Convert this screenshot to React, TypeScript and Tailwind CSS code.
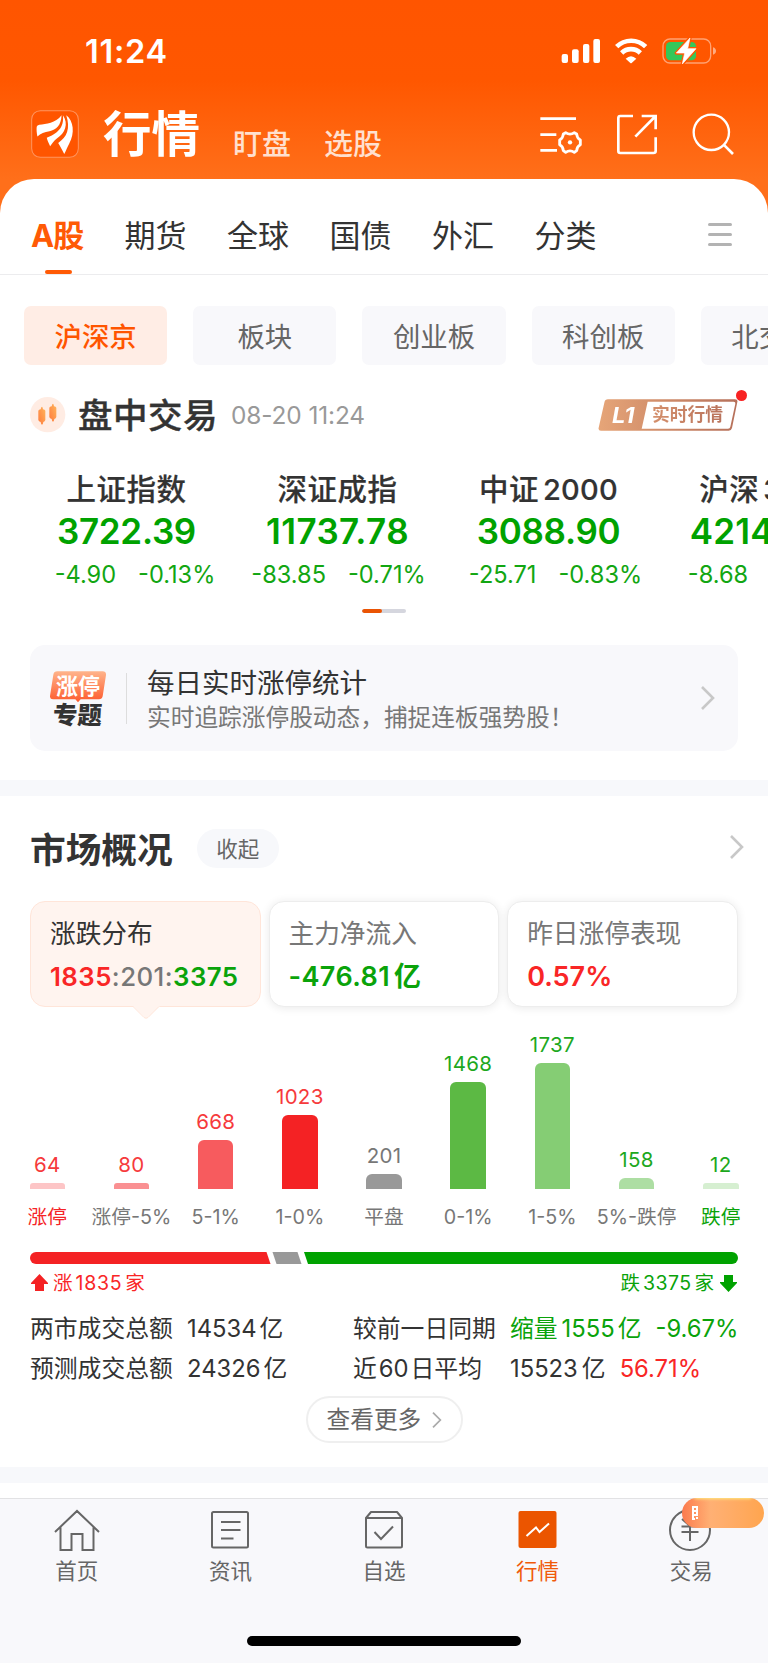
import type { ReactNode } from "react"
import clsx from "clsx"

const tabs = ["期货", "全球", "国债", "外汇", "分类"]

const boards = ["沪深京", "板块", "创业板", "科创板", "北交所"]

const indices = [
    { name: "上证指数", value: "3722.39", change: "-4.90", percent: "-0.13%", shift: "pl-[17px]", spacing: "tracking-[-0.3px]" },
    { name: "深证成指", value: "11737.78", change: "-83.85", percent: "-0.71%", shift: "pl-[2px]", spacing: "tracking-[0.4px]" },
    { name: "中证", num: "2000", value: "3088.90", change: "-25.71", percent: "-0.83%", shift: "pl-[14px]", spacing: "tracking-[-0.3px]" },
    { name: "沪深", num: "300", value: "4214.90", change: "-8.68", percent: "-0.21%", shift: "pl-[18px]", spacing: "tracking-[0.2px]" },
]

const distribution = [
    { label: "涨停", count: 64, height: 6, bar: "bg-[#fdc5c6]", text: "text-[#f63a3c]", labelText: "text-[#f52427]" },
    { label: "涨停-5%", count: 80, height: 6, bar: "bg-[#fa9092]", text: "text-[#f63a3c]", labelText: "text-[#777]" },
    { label: "5-1%", count: 668, height: 49, bar: "bg-[#f75b5e]", text: "text-[#f63a3c]", labelText: "text-[#777]" },
    { label: "1-0%", count: 1023, height: 74, bar: "bg-[#f42224]", text: "text-[#f63a3c]", labelText: "text-[#777]" },
    { label: "平盘", count: 201, height: 15, bar: "bg-[#999]", text: "text-[#777]", labelText: "text-[#777]" },
    { label: "0-1%", count: 1468, height: 107, bar: "bg-[#5cb944]", text: "text-[#1da81d]", labelText: "text-[#777]" },
    { label: "1-5%", count: 1737, height: 126, bar: "bg-[#85cd74]", text: "text-[#1da81d]", labelText: "text-[#777]" },
    { label: "5%-跌停", count: 158, height: 11, bar: "bg-[#addea3]", text: "text-[#1da81d]", labelText: "text-[#777]" },
    { label: "跌停", count: 12, height: 6, bar: "bg-[#d6efd1]", text: "text-[#1da81d]", labelText: "text-[#0aa30a]" },
]

function StatusBar() {
    return (
        <div className="flex h-[102px] items-center justify-between pl-[85px] pr-[51px] text-white">
            <span className="mt-[2px] text-[32.500px] font-semibold leading-none tracking-[0.700px]">11:24</span>
            <svg className="h-[28px] w-[156px]" viewBox="531 111 468 84" fill="none">
                <g fill="#fff">
                    <rect x="533" y="162" width="19" height="27" rx="6" />
                    <rect x="564" y="148" width="20" height="41" rx="6" />
                    <rect x="597" y="132" width="19" height="57" rx="6" />
                    <rect x="628" y="117" width="20" height="72" rx="6" />
                    <path d="M725 176Q741 161 757 176L743 189Q741 191 739 189Z" />
                    <path d="M987 142Q996 145 996 153T987 164Z" opacity=".5" />
                </g>
                <path d="M698 140A62 62 0 0 1 785 140" stroke="#fff" strokeWidth="14" />
                <path d="M713 159A40 40 0 0 1 769 159" stroke="#fff" strokeWidth="14" />
                <rect x="837" y="117" width="143" height="72" rx="21" stroke="#fff" strokeOpacity=".45" strokeWidth="4" />
                <rect x="846" y="126" width="90" height="55" rx="13" fill="#34c759" />
                <path d="M918 114L877 159H902L895 192L936 146H911Z" fill="#fff" stroke="#ff5700" strokeWidth="10" strokeLinejoin="round" />
                <path d="M918 114L877 159H902L895 192L936 146H911Z" fill="#fff" stroke="#fff" strokeWidth="2" strokeLinejoin="round" />
            </svg>
        </div>
    )
}

function Header() {
    return (
        <header className="flex h-[77px] items-start pl-[31px] pr-[34px] text-white">
            <svg className="mt-[8px] h-[48px] w-[48px] shrink-0" viewBox="95 330 143 143">
                <rect x="97" y="332" width="139" height="139" rx="26" fill="#ff5500" stroke="#ff9560" strokeWidth="3" />
                <g fill="#fff">
                    <path d="M112 380Q113 375 120 374C140 372 168 370 186 346C185 376 170 390 150 393C135 395 124 400 114 409C112 398 111 388 112 380Z" />
                    <path d="M142 413C170 402 195 385 190 346C208 372 196 400 172 415C163 422 158 430 152 438C148 430 144 422 142 413Z" />
                    <path d="M176 428C202 412 213 385 200 346C222 362 226 400 209 430C202 442 200 452 194 461C188 448 182 438 176 428Z" />
                </g>
            </svg>
            <h1 className="ml-[24px] mt-[4px] text-[48.500px] font-bold leading-[58px]">行情</h1>
            <span className="ml-[33px] mt-[23px] text-[29px] font-medium leading-[40px] text-[#ffe0cf]">盯盘</span>
            <span className="ml-[33px] mt-[23px] text-[29px] font-medium leading-[40px] text-[#ffe0cf]">选股</span>
            <div className="ml-auto mt-[11px] flex gap-[34px]">
                <svg className="h-[42px] w-[42px]" viewBox="471 338 126 126" fill="none" stroke="#fff" strokeWidth="8.500">
                    <path d="M472 355H579M472 403H520M472 450H522" />
                    <path d="M548 397Q561 406 574 397L581 401Q582 414 592 419V433Q582 438 581 451L574 456Q561 447 548 456L541 451Q540 438 530 433V419Q540 414 541 401Z" strokeLinejoin="round" />
                    <circle cx="561" cy="426" r="6.500" fill="#fff" stroke="none" />
                </svg>
                <svg className="h-[42px] w-[42px]" viewBox="696 338 126 126" fill="none" stroke="#fff" strokeWidth="8">
                    <path d="M747 347H709Q703 347 703 353V452Q703 458 709 458H808Q815 458 815 452V411M773 347H815V387M815 347L754 409" />
                </svg>
                <svg className="h-[42px] w-[42px]" viewBox="925 338 126 126" fill="none" stroke="#fff" strokeWidth="7">
                    <circle cx="983" cy="396" r="53" />
                    <path d="M1020 433L1048 461" strokeWidth="8" />
                </svg>
            </div>
        </header>
    )
}

function MarketTabs() {
    return (
        <nav className="flex h-[96px] border-b border-[#ececee] pl-[31px] pr-[36px] pt-[32px] text-[31px] leading-[50px] text-[#333]">
            <div className="relative w-[53px] whitespace-nowrap font-bold tracking-[-0.800px] text-[#ff5a05]">
                A股
                <span className="absolute left-[13.500px] top-[59px] h-[4px] w-[27px] rounded-full bg-[#ff5a05]" />
            </div>
            <div className="ml-[40.500px] flex gap-[40.500px]">
                {tabs.map((tab) => (
                    <span key={tab} className="w-[62px] whitespace-nowrap">{tab}</span>
                ))}
            </div>
            <div className="ml-auto mt-[12px] flex h-[23px] w-[24px] flex-col justify-between">
                <i className="h-[3px] rounded-full bg-[#b3b3b3]" />
                <i className="h-[3px] rounded-full bg-[#b3b3b3]" />
                <i className="h-[3px] rounded-full bg-[#b3b3b3]" />
            </div>
        </nav>
    )
}

function BoardChips() {
    return (
        <div className="mt-[31px] flex h-[59px] gap-[25.900px] overflow-hidden pl-[24px]">
            {boards.map((board, idx) => (
                <div
                    key={board}
                    className={clsx(
                        "w-[143.300px] shrink-0 rounded-[7px] text-center text-[27.400px] leading-[63px]",
                        idx === 0 ? "bg-[#ffede5] font-medium text-[#ff5500]" : "bg-[#f8f8fb] text-[#666]"
                    )}
                >
                    {board}
                </div>
            ))}
        </div>
    )
}

function SessionRow() {
    return (
        <div className="flex h-[100px] items-center pl-[30px] pr-[30px]">
            <svg className="h-[36px] w-[36px]" viewBox="0 0 108 108">
                <defs>
                    <linearGradient id="candle" x1="0" y1="1" x2="1" y2="0">
                        <stop offset="0" stopColor="#ff7a3c" />
                        <stop offset="1" stopColor="#ffb65c" />
                    </linearGradient>
                </defs>
                <circle cx="53" cy="53" r="53" fill="#ffece3" />
                <g fill="url(#candle)">
                    <path d="M36 29q2 0 3 8q6 1 7 4v28q-1 4-6 6q-1 8-4 8t-4-8q-6-2-7-6v-28q1-3 7-4q1-8 4-8z" />
                    <path d="M69 20q2 0 3 8q6 1 7 4v28q-1 4-6 6q-1 8-4 8t-4-8q-6-2-7-6v-28q1-3 7-4q1-8 4-8z" />
                </g>
            </svg>
            <h2 className="ml-[12px] mt-[1px] text-[34.500px] font-medium leading-[50px] tracking-[0.500px] text-[#333] [-webkit-text-stroke:0.4px_#333]">盘中交易</h2>
            <span className="ml-[13px] text-[24.400px] leading-[50px] tracking-[-0.100px] text-[#999]">08-20 11:24</span>
            <div className="relative ml-auto h-[32px] w-[140px]">
                <svg className="absolute inset-0 h-[32px] w-[140px]" viewBox="643 325 420 96">
                    <defs>
                        <linearGradient id="level" x1="0" y1="0" x2="1" y2="0">
                            <stop offset="0" stopColor="#e6a578" />
                            <stop offset="1" stopColor="#b6705a" />
                        </linearGradient>
                    </defs>
                    <path d="M673 326H1054Q1063 326 1061 334L1045 412Q1043 420 1035 420H652Q643 420 645 411L662 336Q664 326 673 326Z" fill="url(#level)" />
                    <path d="M792 333H1050Q1056 333 1055 339L1040 408Q1039 414 1033 414H774Z" fill="#fff" />
                </svg>
                <span className="absolute left-[14px] top-0 origin-left scale-x-110 text-[21.500px] font-bold italic leading-[33px] text-white">L1</span>
                <span className="absolute left-[54px] top-[-1px] whitespace-nowrap bg-gradient-to-r from-[#d4906c] to-[#b9735c] bg-clip-text text-[17.800px] font-bold leading-[33px] text-transparent">实时行情</span>
                <span className="absolute -top-[9px] left-[138px] h-[11px] w-[11px] rounded-full bg-[#f82222]" />
            </div>
        </div>
    )
}

function IndexStrip() {
    return (
        <div>
            <div className="flex overflow-hidden pl-[21px]">
                {indices.map((item) => (
                    <div key={item.name} className="w-[211px] shrink-0 text-center">
                        <div className="h-[48px] text-[29.500px] font-medium leading-[48px] tracking-[0.500px] text-[#333] [-webkit-text-stroke:0.2px_#333]">
                            {item.name}
                            {item.num && <span className="ml-[4px] text-[29px] tracking-[0.300px]">{item.num}</span>}
                        </div>
                        <div className={clsx("h-[36px] text-[35px] font-semibold leading-[36px] text-[#00a200]", item.spacing)}>{item.value}</div>
                        <div className={clsx("flex h-[52px] justify-center gap-[22px] whitespace-nowrap text-[23.600px] leading-[52px] text-[#12a612]", item.shift)}>
                            <span>{item.change}</span>
                            <span>{item.percent}</span>
                        </div>
                    </div>
                ))}
            </div>
            <div className="mx-auto mt-[8px] h-[4px] w-[44px] overflow-hidden rounded-full bg-[#d5d6de]">
                <div className="h-full w-[20px] rounded-full bg-[#ea5404]" />
            </div>
        </div>
    )
}

function Chevron({ className }: { className: string }) {
    return (
        <svg className={className} viewBox="0 0 14 24" fill="none" stroke="currentColor" strokeWidth="2.600">
            <path d="M1 1L12 12L1 23" />
        </svg>
    )
}

function TopicBanner() {
    return (
        <div className="mx-[30px] mt-[32px] flex h-[106px] items-center rounded-[15px] bg-[#f8f8fb] pl-[20px] pr-[23px]">
            <div className="relative h-[54px] w-[56px]">
                <svg className="absolute inset-0 h-[32px] w-[56px]" viewBox="0 0 168 96">
                    <defs>
                        <linearGradient id="topic" x1="0" y1="0" x2="0" y2="1">
                            <stop offset="0" stopColor="#ffb48b" />
                            <stop offset="1" stopColor="#fd5a2c" />
                        </linearGradient>
                    </defs>
                    <path d="M22 1H158Q169 1 168 12L158 76Q156 85 147 85H92L84 94L76 85H9Q-1 85 0 75L10 11Q12 1 22 1Z" fill="url(#topic)" />
                </svg>
                <span className="absolute left-[6px] top-[1px] text-[22px] font-bold leading-[29px] text-white">涨停</span>
                <span className="absolute left-[3px] top-[31px] -skew-x-3 text-[24.500px] font-black leading-[26px] text-[#333]">专题</span>
            </div>
            <div className="ml-[20px] h-[51px] w-px bg-[#ddd]" />
            <div className="ml-[20px] mt-[3px] whitespace-nowrap">
                <div className="text-[27.500px] leading-[36px] text-[#333]">每日实时涨停统计</div>
                <div className="text-[23.700px] leading-[34px] text-[#777]">实时追踪涨停股动态，捕捉连板强势股！</div>
            </div>
            <Chevron className="ml-auto h-[24px] w-[14px] text-[#c8c8c8]" />
        </div>
    )
}

function OverviewCards() {
    return (
        <div className="flex h-[106px] gap-[8px] px-[30px] text-[25.700px] leading-[34px]">
            <div className="relative w-[230.500px] rounded-[15px] border border-[#ffe5d9] bg-[#fff4ef] pl-[19px] pt-[15px]">
                <div className="text-[#333]">涨跌分布</div>
                <div className="mt-[8px] whitespace-nowrap text-[25.800px] font-semibold leading-[36px] tracking-[0.450px] text-[#777]">
                    <span className="text-[#f92626]">1835</span><span className="font-medium">:201:</span><span className="text-[#0aa30a]">3375</span>
                </div>
                <svg className="absolute left-[101px] top-[103px] h-[14px] w-[28px]" viewBox="0 0 28 14" fill="#fff4ef">
                    <path d="M0 0H28V1L16 12Q14 14 12 12L1 1Z" />
                    <path d="M1 1.500L12 12.500Q14 14 16 12.500L27 1.500" fill="none" stroke="#ffe5d9" />
                </svg>
            </div>
            <OverviewCard title="主力净流入">
                <span className="tracking-[0.400px] text-[#0aa30a]">-476.81<span className="ml-[4px]">亿</span></span>
            </OverviewCard>
            <OverviewCard title="昨日涨停表现">
                <span className="text-[#f92626]">0.57%</span>
            </OverviewCard>
        </div>
    )
}

function OverviewCard({ title, children }: { title: string; children: ReactNode }) {
    return (
        <div className="w-[230.700px] rounded-[15px] border border-[#ededed] bg-white pl-[19px] pt-[15px] shadow-[0_1px_10px_rgba(0,0,0,0.09)]">
            <div className="text-[#777]">{title}</div>
            <div className="mt-[8px] whitespace-nowrap text-[27px] font-semibold leading-[36px]">{children}</div>
        </div>
    )
}

function DistributionChart() {
    return (
        <div className="flex h-[238px] justify-between px-[29.500px]">
            {distribution.map((d) => (
                <div key={d.label} className="flex w-[35.500px] flex-col items-center justify-end">
                    <span className={clsx("text-[20.500px] leading-[34px] tracking-[0.300px]", d.text)}>{d.count}</span>
                    <div
                        className={clsx("mt-[1px] w-full shrink-0", d.height < 10 ? "rounded-t-[3px]" : "rounded-t-[6px]", d.bar)}
                        style={{ height: d.height }}
                    />
                    <span className={clsx("h-[56px] shrink-0 whitespace-nowrap text-[19.700px] leading-[57px]", d.labelText)}>{d.label}</span>
                </div>
            ))}
        </div>
    )
}

function RiseFallBar() {
    return (
        <div className="mx-[30px] mt-[7px]">
            <svg className="h-[12px] w-[708px]" viewBox="0 0 708 12">
                <path d="M6 0H236.500L240.500 12H6A6 6 0 0 1 6 0Z" fill="#f42224" />
                <path d="M242.500 0H267.500L271.500 12H246.500Z" fill="#999" />
                <path d="M274 0H702A6 6 0 0 1 702 12H278Z" fill="#00a200" />
            </svg>
            <div className="flex h-[38px] items-center justify-between text-[19.500px] leading-[38px]">
                <div className="flex items-center pl-[1px] text-[#f92626]">
                    <svg className="h-[18px] w-[17px]" viewBox="0 0 17 18" fill="#f42224">
                        <path d="M8.500 0L17 9V10H13V17H4V10H0V9Z" />
                    </svg>
                    <span className="ml-[5px]">涨</span>
                    <span className="ml-[3px] tracking-[0.700px]">1835</span>
                    <span className="ml-[3px]">家</span>
                </div>
                <div className="flex items-center pr-[1px] text-[#0aa30a]">
                    <span>跌</span>
                    <span className="ml-[3px] tracking-[0.400px]">3375</span>
                    <span className="ml-[3px]">家</span>
                    <svg className="ml-[6px] h-[18px] w-[17px]" viewBox="0 0 17 18" fill="#00a200">
                        <path d="M8.500 18L17 9V8H13V1H4V8H0V9Z" />
                    </svg>
                </div>
            </div>
        </div>
    )
}

function TurnoverStats() {
    return (
        <div className="mt-[7px] grid h-[79px] grid-cols-[157px_166px_157px_auto] whitespace-nowrap pl-[30px] text-[23.800px] leading-[39px] text-[#333]">
            <span>两市成交总额</span>
            <span>14534<span className="ml-[3px]">亿</span></span>
            <span>较前一日同期</span>
            <span className="text-[#0aa30a]">缩量<span className="ml-[4px]">1555</span><span className="ml-[3px]">亿</span><span className="ml-[14px]">-9.67%</span></span>
            <span>预测成交总额</span>
            <span>24326<span className="ml-[3px]">亿</span></span>
            <span>近<span className="mx-[2px]">60</span>日平均</span>
            <span>15523<span className="ml-[4px]">亿</span><span className="ml-[14px] text-[#f92626]">56.71%</span></span>
        </div>
    )
}

function NavItem({ label, active, children }: { label: string; active?: boolean; children: ReactNode }) {
    return (
        <div className={clsx("relative flex w-1/5 flex-col items-center text-[21.500px] leading-[32px]", active ? "text-[#f05a0a]" : "text-[#666]")}>
            <svg className="h-[44px] w-[48px]" viewBox="0 0 48 44" fill="none" stroke="currentColor" strokeWidth="2" strokeLinejoin="round">
                {children}
            </svg>
            <span className="mt-[3px]">{label}</span>
        </div>
    )
}

function BottomNav() {
    return (
        <footer className="h-[165px] border-t border-[#e2e2e4] bg-[#f8f8fb]">
            <div className="relative flex pt-[9px]">
                <NavItem label="首页">
                    <path d="M2 24L24 3L46 24M7.500 19.500V42H18.500V26H29.500V42H40.500V19.500" strokeLinejoin="miter" />
                </NavItem>
                <NavItem label="资讯">
                    <rect x="6" y="4" width="36" height="35.500" rx="1.500" />
                    <path d="M15 14H34.500M15 22H34.500M15 30.500H27.500" />
                </NavItem>
                <NavItem label="自选">
                    <path d="M6 10V38Q6 39.500 7.500 39.500H40.500Q42 39.500 42 38V10L37 4H11L6 10H42" />
                    <path d="M14.500 24L21 31L33 18.500" strokeLinejoin="miter" />
                </NavItem>
                <NavItem label="行情" active>
                    <rect x="4.500" y="3" width="38" height="37" rx="2" fill="#eb5500" stroke="none" />
                    <path d="M12.500 28L22 19.500L25.500 24L35 15.500" stroke="#fff" strokeLinejoin="miter" />
                </NavItem>
                <NavItem label="交易">
                    <circle cx="23" cy="22" r="20" />
                    <path d="M15 11L23 18L31 11M14.500 18.500H31.500M14.500 24H31.500M23 18V33" />
                </NavItem>
                {/* promo bubble over the trade tab */}
                <div className="absolute right-[4px] top-[-1px] h-[30px] w-[82px] overflow-hidden rounded-full bg-gradient-to-r from-[#fb7a4e] via-[#ffb074] via-35% to-[#ffa54e]">
                    <div className="absolute -top-[4px] left-[12px] h-[5px] w-[58px] rounded-full bg-[#ffec80] blur-[1.5px]" />
                    <svg className="absolute left-[10px] top-[8px] h-[14px] w-[6px]" viewBox="0 0 6 14" fill="none" stroke="#fff" strokeWidth="2">
                        <path d="M1 0V14M0 1H6M1 5H6M1 9H6M5 1V9M0 13H3M4 12H6" />
                    </svg>
                </div>
            </div>
            <div className="mx-auto mt-[49px] h-[10px] w-[274px] rounded-full bg-black" />
        </footer>
    )
}

export default function App() {
    return (
        <div className="flex h-[1663px] w-[768px] flex-col overflow-hidden bg-white font-[Inter,'Noto_Sans_CJK_SC',sans-serif]">
            <div className="bg-[linear-gradient(#ff5500_0px,#ff5700_80px,#ff6f1a_179px,#ff6f1a_240px)]">
                <StatusBar />
                <Header />
                <div className="rounded-t-[34px] bg-white">
                    <MarketTabs />
                </div>
            </div>
            <BoardChips />
            <SessionRow />
            <IndexStrip />
            <TopicBanner />
            <div className="mt-[29px] h-[16px] shrink-0 bg-[#f7f8fb]" />
            <div className="flex h-[105px] items-center pl-[30px] pr-[24px]">
                <h2 className="mt-[3px] text-[35.700px] font-bold leading-[50px] text-[#333]">市场概况</h2>
                <span className="ml-[24px] h-[39px] w-[82px] rounded-full bg-[#f7f8fb] text-center text-[21.500px] leading-[40px] text-[#666]">收起</span>
                <Chevron className="-mt-[3px] ml-auto h-[24px] w-[14px] text-[#c8c8c8]" />
            </div>
            <OverviewCards />
            <DistributionChart />
            <RiseFallBar />
            <TurnoverStats />
            <button className="mx-auto mt-[8px] flex h-[47px] w-[157px] shrink-0 items-center rounded-full border-2 border-[#efefef] pl-[19px] text-[23.700px] text-[#666]">
                查看更多
                <Chevron className="ml-[11px] h-[16px] w-[10px] text-[#aaa]" />
            </button>
            <div className="mb-[15px] mt-[24px] h-[16px] shrink-0 bg-[#f7f8fb]" />
            <BottomNav />
        </div>
    )
}
